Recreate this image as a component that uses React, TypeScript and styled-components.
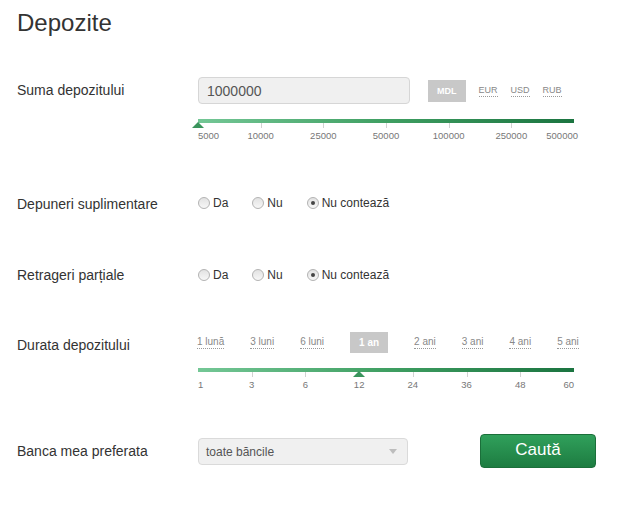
import React, { useState } from "react";
import styled, { createGlobalStyle, css } from "styled-components";

const GlobalStyle = createGlobalStyle`
  html, body { margin: 0; padding: 0; background: #fff; }
  body { font-family: "Liberation Sans", Arial, sans-serif; color: #333; }
  * { box-sizing: border-box; }
`;

const Page = styled.div`
  width: 633px;
  height: 509px;
  padding: 9px 0 0 17px;
`;

const Title = styled.h1`
  margin: 0;
  font-size: 24px;
  line-height: 28px;
  font-weight: normal;
  color: #333;
`;

const Row = styled.div<{ $gap: number }>`
  display: grid;
  grid-template-columns: 181px 1fr;
  align-items: start;
  margin-top: ${(p) => p.$gap}px;
`;

const Label = styled.div<{ $h: number; $shift?: number }>`
  font-size: 14px;
  line-height: ${(p) => p.$h}px;
  padding-top: ${(p) => p.$shift ?? 0}px;
  color: #333;
`;

const Control = styled.div`
  display: flex;
  flex-direction: column;
  width: 376px;
`;

const InputLine = styled.div`
  display: flex;
  align-items: center;
`;

const AmountInput = styled.input`
  width: 212px;
  height: 27px;
  border: 1px solid #d6d6d6;
  border-radius: 4px;
  background: #f0f0f0;
  padding: 0 8px;
  font-family: "Liberation Sans", Arial, sans-serif;
  font-size: 14px;
  color: #555;
  outline: none;
`;

const Switcher = styled.div<{ $gap: number; $offset: number }>`
  display: flex;
  align-items: center;
  gap: ${(p) => p.$gap}px;
  margin-left: ${(p) => p.$offset}px;
`;

const Choice = styled.span<{ $active: boolean; $size: number; $h: number; $pad: number }>`
  display: inline-flex;
  flex-shrink: 0;
  white-space: nowrap;
  align-items: center;
  height: ${(p) => p.$h}px;
  font-size: ${(p) => p.$size}px;
  cursor: pointer;
  ${(p) =>
    p.$active
      ? css`
          background: #c8c8c8;
          color: #fff;
          font-weight: bold;
          padding: 0 ${p.$pad}px;
        `
      : css`
          color: #888;
        `}
`;

const Dotted = styled.span`
  line-height: 1;
  padding-top: 1px;
  padding-bottom: 1px;
  border-bottom: 1px dotted #9a9a9a;
`;

const SliderBox = styled.div<{ $top: number }>`
  position: relative;
  width: 376px;
  height: 23px;
  margin-top: ${(p) => p.$top}px;
`;

const Track = styled.div`
  height: 4px;
  background: linear-gradient(to right, #74c796, #3f9f62 50%, #1b7440);
`;

const Tick = styled.span`
  position: absolute;
  top: 4px;
  width: 1px;
  height: 5px;
  background: #d2d2d2;
`;

const Marker = styled.span`
  position: absolute;
  top: 3px;
  width: 0;
  height: 0;
  border-left: 6px solid transparent;
  border-right: 6px solid transparent;
  border-bottom: 6px solid #3a945c;
  transform: translateX(-50%);
`;

const TickLabel = styled.span`
  position: absolute;
  top: 11px;
  font-size: 9.5px;
  line-height: 12px;
  color: #777;
  white-space: nowrap;
`;

const RadioGroup = styled.div`
  display: flex;
  align-items: center;
  gap: 24px;
  height: 20px;
`;

const RadioOption = styled.label`
  display: inline-flex;
  align-items: center;
  gap: 3px;
  font-size: 12px;
  color: #333;
  cursor: pointer;
`;

const RadioCircle = styled.span<{ $checked: boolean }>`
  position: relative;
  width: 12px;
  height: 12px;
  border-radius: 50%;
  border: 1px solid #b3b3b3;
  background: linear-gradient(#e2e2e2, #f7f7f7);
  ${(p) =>
    p.$checked &&
    css`
      &::after {
        content: "";
        position: absolute;
        left: 3px;
        top: 3px;
        width: 4px;
        height: 4px;
        border-radius: 50%;
        background: #454545;
      }
    `}
`;

const BottomLine = styled.div`
  display: flex;
  align-items: flex-start;
  gap: 72px;
`;

const SelectBox = styled.div`
  display: flex;
  align-items: center;
  justify-content: space-between;
  width: 210px;
  height: 27px;
  margin-top: 5px;
  padding: 0 10px 0 7px;
  border: 1px solid #dadada;
  border-radius: 4px;
  background: #f0f0f0;
  font-size: 12px;
  color: #555;
`;

const Arrow = styled.span`
  width: 0;
  height: 0;
  border-left: 4px solid transparent;
  border-right: 4px solid transparent;
  border-top: 5px solid #bdbdbd;
`;

const SearchButton = styled.button`
  width: 116px;
  height: 34px;
  margin-top: 1px;
  border: 1px solid #1b6f3a;
  border-radius: 4px;
  background: linear-gradient(#30a05b, #1d7c41);
  color: #fff;
  font-family: "Liberation Sans", Arial, sans-serif;
  font-size: 17px;
  cursor: pointer;
  padding: 0 0 2px;
`;

type SliderProps = {
  labels: string[];
  marker: number;
  top: number;
  lastShift: number;
};

function Slider({ labels, marker, top, lastShift }: SliderProps) {
  const n = labels.length - 1;
  return (
    <SliderBox $top={top}>
      <Track />
      {labels.map((_, i) =>
        i > 0 && i < n ? <Tick key={"t" + i} style={{ left: `${(i / n) * 100}%` }} /> : null
      )}
      <Marker style={{ left: `${(marker / n) * 100}%` }} />
      {labels.map((l, i) => {
        const style: React.CSSProperties =
          i === 0
            ? { left: 0 }
            : i === n
            ? { right: -lastShift }
            : { left: `${(i / n) * 100}%`, transform: "translateX(-50%)" };
        return (
          <TickLabel key={l} style={style}>
            {l}
          </TickLabel>
        );
      })}
    </SliderBox>
  );
}

function Radios() {
  const [value, setValue] = useState("any");
  const opts = [
    { v: "yes", t: "Da" },
    { v: "no", t: "Nu" },
    { v: "any", t: "Nu contează" },
  ];
  return (
    <RadioGroup>
      {opts.map((o) => (
        <RadioOption key={o.v} onClick={() => setValue(o.v)}>
          <RadioCircle $checked={value === o.v} />
          {o.t}
        </RadioOption>
      ))}
    </RadioGroup>
  );
}

export default function App() {
  const [currency, setCurrency] = useState("MDL");
  const [term, setTerm] = useState("1 an");
  const currencies = ["MDL", "EUR", "USD", "RUB"];
  const terms = ["1 lună", "3 luni", "6 luni", "1 an", "2 ani", "3 ani", "4 ani", "5 ani"];
  return (
    <>
      <GlobalStyle />
      <Page>
        <Title>Depozite</Title>

        <Row $gap={40}>
          <Label $h={27}>Suma depozitului</Label>
          <Control>
            <InputLine>
              <AmountInput defaultValue="1000000" />
              <Switcher $gap={13} $offset={18}>
                {currencies.map((c) => (
                  <Choice
                    key={c}
                    $active={c === currency}
                    $size={9}
                    $h={22}
                    $pad={9}
                    onClick={() => setCurrency(c)}
                  >
                    {c === currency ? c : <Dotted>{c}</Dotted>}
                  </Choice>
                ))}
              </Switcher>
            </InputLine>
            <Slider
              labels={["5000", "10000", "25000", "50000", "100000", "250000", "500000"]}
              marker={0}
              top={15}
              lastShift={4}
            />
          </Control>
        </Row>

        <Row $gap={51}>
          <Label $h={20} $shift={1}>Depuneri suplimentare</Label>
          <Radios />
        </Row>

        <Row $gap={51}>
          <Label $h={20}>Retrageri parțiale</Label>
          <Radios />
        </Row>

        <Row $gap={47}>
          <Label $h={21} $shift={3}>
            Durata depozitului
          </Label>
          <Control>
            <Switcher $gap={26} $offset={-1}>
              {terms.map((t) => (
                <Choice
                  key={t}
                  $active={t === term}
                  $size={10}
                  $h={21}
                  $pad={9}
                  onClick={() => setTerm(t)}
                >
                  {t === term ? t : <Dotted>{t}</Dotted>}
                </Choice>
              ))}
            </Switcher>
            <Slider
              labels={["1", "3", "6", "12", "24", "36", "48", "60"]}
              marker={3}
              top={15}
              lastShift={0}
            />
          </Control>
        </Row>

        <Row $gap={42}>
          <Label $h={34} $shift={1}>Banca mea preferata</Label>
          <BottomLine>
            <SelectBox>
              toate băncile
              <Arrow />
            </SelectBox>
            <SearchButton>Caută</SearchButton>
          </BottomLine>
        </Row>
      </Page>
    </>
  );
}
